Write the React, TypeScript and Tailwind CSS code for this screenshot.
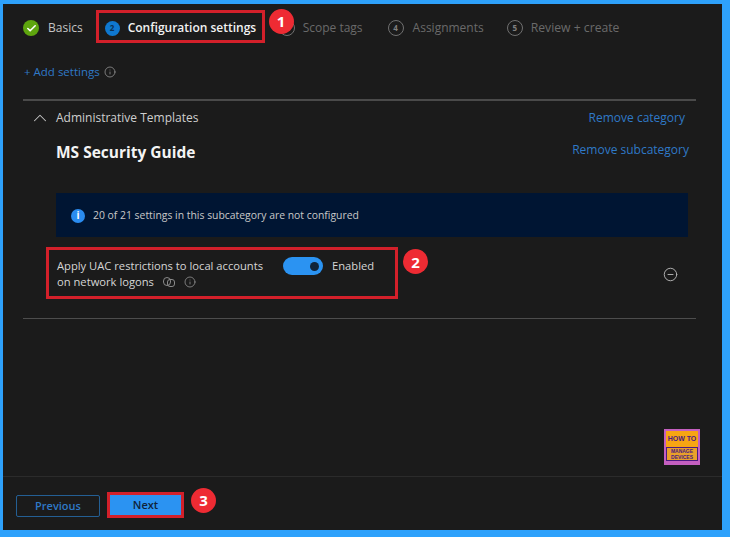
import { Check, ChevronUp, Info, MinusCircle } from "lucide-react";

function Badge({ n, className }: { n: number; className: string }) {
  return (
    <span className={`absolute flex h-[25px] w-[25px] items-center justify-center rounded-full bg-[#ee2b33] text-[15px] font-bold text-white ${className}`}>
      {n}
    </span>
  );
}

function StepNumber({ n }: { n: number }) {
  return (
    <span className="flex h-[16px] w-[16px] items-center justify-center rounded-full border border-[#707070] text-[8px] font-bold text-[#808080]">
      {n}
    </span>
  );
}

function SmallInfo() {
  return <Info size={12} strokeWidth={1.5} className="text-[#9a9a9a]" />;
}

export default function App() {
  return (
    <div className="h-[537px] w-[730px] bg-[#2ea1fb] pb-[7px] pl-[3px] pr-[8px] pt-[4px] font-['Open_Sans',sans-serif]">
      <div className="relative flex h-full flex-col bg-[#1b1b1b]">
        {/* Steps */}
        <div className="flex h-[48px] items-center pl-[20px] text-[12px]">
          <span className="flex h-[16px] w-[16px] items-center justify-center rounded-full bg-[#5ea50e]">
            <Check size={11} strokeWidth={3.5} className="text-white" />
          </span>
          <span className="ml-[9px] text-[#c4c4c4]">Basics</span>
          <div className="relative -mt-[3px] ml-[13px] flex h-[33px] w-[169px] items-center border-[3px] border-[#d3202a] pl-[6px] pt-[3px]">
            <span className="flex h-[15px] w-[15px] items-center justify-center rounded-full bg-[#0f78d0] text-[8px] font-bold text-[#0b2f52]">2</span>
            <span className="ml-[8px] text-[12px] font-semibold whitespace-nowrap text-[#f2f2f2]">Configuration settings</span>
            <Badge n={1} className="-right-[32px] -top-[4px]" />
          </div>
          <span className="ml-[14px] flex items-center gap-[8px] text-[#6a6a6a]">
            <StepNumber n={3} />
            Scope tags
          </span>
          <span className="ml-[25px] flex items-center gap-[9px] text-[#6a6a6a]">
            <StepNumber n={4} />
            Assignments
          </span>
          <span className="ml-[23px] flex items-center gap-[8px] text-[12.2px] text-[#6a6a6a]">
            <StepNumber n={5} />
            Review + create
          </span>
        </div>

        <div className="ml-[21px] mt-[13px] flex h-[14px] items-center gap-[4px] text-[11.5px] text-[#2f79c7]">
          + Add settings
          <SmallInfo />
        </div>

        {/* Category */}
        <div className="ml-[20px] mr-[26px] mt-[20px] border-b border-t-2 border-b-[#4d4d4d] border-t-[#4a4a4a] pb-[19px]">
          <div className="flex items-center justify-between pr-[11px] pt-[8px] text-[12px]">
            <div className="flex items-center">
              <ChevronUp size={22} strokeWidth={1.1} className="-my-[3px] ml-[6px] text-[#c8c8c8]" />
              <span className="ml-[5px] text-[#cfcfcf]">Administrative Templates</span>
            </div>
            <span className="text-[#2f79c7]">Remove category</span>
          </div>

          <div className="mt-[14px] flex items-start justify-between pl-[33px] pr-[7px]">
            <h2 className="text-[15.5px] leading-[22px] font-bold text-[#f4f4f4]">MS Security Guide</h2>
            <span className="text-[12px] leading-[18px] text-[#2f79c7]">Remove subcategory</span>
          </div>

          <div className="ml-[33px] mr-[8px] mt-[30px] flex h-[44px] items-center bg-[#001533] pl-[15px] pt-[1px] text-[10.4px] text-[#c8c8c8]">
            <span className="flex h-[14px] w-[14px] items-center justify-center rounded-full bg-[#2a8cf0] text-[10px] font-bold text-white">i</span>
            <span className="ml-[8px]">20 of 21 settings in this subcategory are not configured</span>
          </div>

          <div className="mt-[10px] flex items-center">
            <div className="relative ml-[23px] flex h-[52px] w-[352px] items-center border-[3px] border-[#d3202a] pl-[8px] pt-[2px] text-[11.2px] leading-[16px] text-[#d6d6d6]">
              <div className="w-[226px]">
                <div className="whitespace-nowrap">Apply UAC restrictions to local accounts</div>
                <div className="flex items-center gap-[9px]">
                  on network logons
                  {/* people icon */}
                  <span className="relative h-[10px] w-[12px]">
                    <span className="absolute left-0 top-0 h-[9px] w-[8px] rounded-full border border-[#8a8a8a]" />
                    <span className="absolute left-[4px] top-[2px] h-[8px] w-[8px] rounded-[3px] border border-[#8a8a8a]" />
                  </span>
                  <SmallInfo />
                </div>
              </div>
              <span className="-mt-[16px] flex h-[18px] w-[40px] items-center justify-end rounded-full bg-[#2b93f2] pr-[4px]">
                <span className="h-[9px] w-[9px] rounded-full bg-[#10243a]" />
              </span>
              <span className="-mt-[16px] ml-[9px] text-[11.2px]">Enabled</span>
              <Badge n={2} className="-right-[33px] -top-[1px]" />
            </div>
            <MinusCircle size={15} strokeWidth={1.5} className="ml-[265px] mt-[2px] text-[#b5b5b5]" />
          </div>
        </div>

        <div className="flex flex-1 items-start justify-end pr-[22px] pt-[110px]">
          {/* Logo */}
          <div className="flex h-[36px] w-[36px] flex-col items-center bg-[#c45fc0] p-[2px] font-['Liberation_Sans',sans-serif] font-bold text-[#4a1a80]">
            <div className="flex h-[16px] w-full items-center justify-center bg-[#f7a513] text-[7px] leading-[8px] whitespace-nowrap">HOW TO</div>
            <div className="flex h-[14px] w-full flex-col items-center justify-center overflow-hidden border border-[#4a1a80] bg-[#e9a02a] text-[5px] leading-[6px] whitespace-nowrap">
              <span>MANAGE</span>
              <span>DEVICES</span>
            </div>
          </div>
        </div>

        {/* Footer */}
        <div className="flex h-[54px] items-start border-t border-[#2b2b2b] pl-[13px] pt-[15px] text-[11px] font-semibold">
          <button className="mt-[3px] h-[22px] w-[84px] rounded-[2px] border border-[#245f94] text-[#2f79c7]">Previous</button>
          <div className="relative ml-[7px] h-[26px] w-[77px] border-[3px] border-[#d3202a]">
            <button className="h-full w-full bg-[#2b93f2] pt-[1px] text-[#10243a]">Next</button>
            <Badge n={3} className="-right-[35px] -top-[7px]" />
          </div>
        </div>
      </div>
    </div>
  );
}
